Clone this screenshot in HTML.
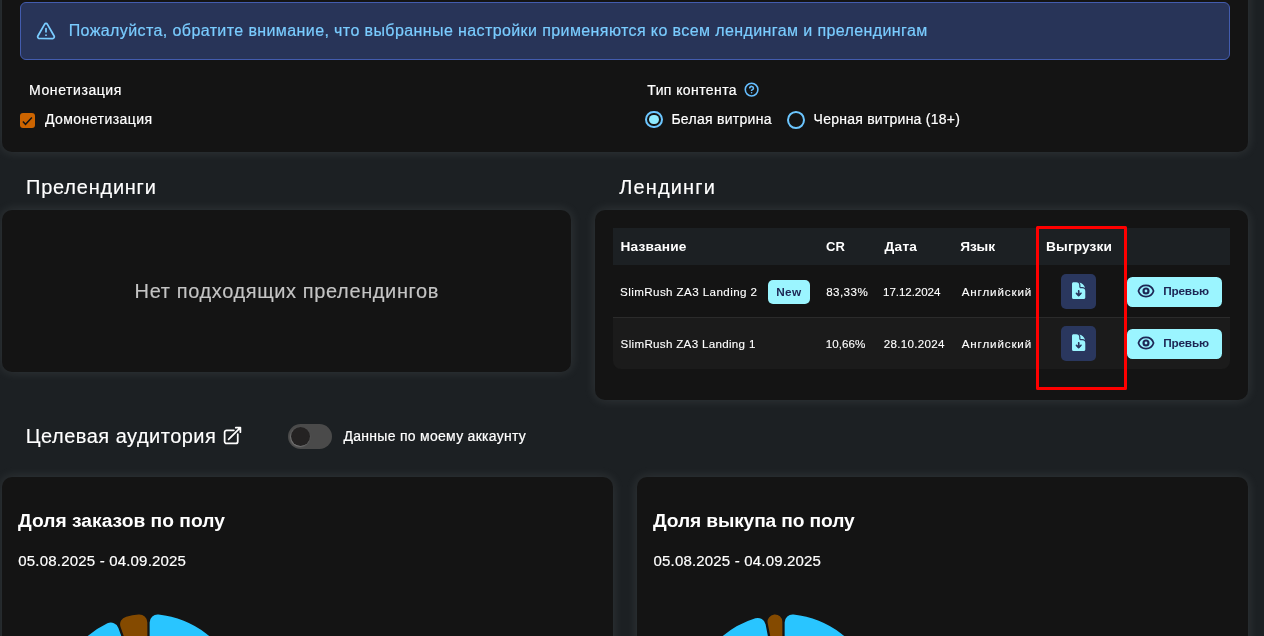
<!DOCTYPE html>
<html lang="ru">
<head>
<meta charset="utf-8">
<title>Offer</title>
<style>
*{box-sizing:border-box;margin:0;padding:0}
html,body{width:1264px;height:636px;overflow:hidden;background:#1c2023}
body{font-family:"Liberation Sans",sans-serif;color:#fff;position:relative}
.card{position:absolute;background:#141414;border-radius:10px;box-shadow:0 0 12px rgba(235,250,250,.115)}
.t{position:absolute;white-space:nowrap;line-height:1;-webkit-text-stroke:.2px}
.t.b{-webkit-text-stroke:0}
.abs{position:absolute}
.b{font-weight:700}
</style>
</head>
<body>
<div id="root" style="position:absolute;left:0;top:0;width:1264px;height:636px;overflow:hidden;will-change:transform">

<!-- top settings card -->
<div class="card" style="left:2px;top:-20px;width:1246px;height:172px"></div>
<div class="abs" style="left:20px;top:2px;width:1210px;height:58px;background:#283458;border:1px solid #435cae;border-radius:6px"></div>
<svg class="abs" style="left:35.5px;top:20.5px" width="20" height="20" viewBox="0 0 24 24" fill="none" stroke="#7accff" stroke-width="2.1" stroke-linecap="round" stroke-linejoin="round"><path d="m21.73 18-8-14a2 2 0 0 0-3.48 0l-8 14A2 2 0 0 0 4 21h16a2 2 0 0 0 1.73-3"/><path d="M12 9v4"/><path d="M12 17h.01"/></svg>
<span class="t" id="banner" style="left:68.7px;top:22.6px;font-size:16px;letter-spacing:0.40px;color:#7accff">Пожалуйста, обратите внимание, что выбранные настройки применяются ко всем лендингам и прелендингам</span>

<span class="t" id="mon" style="left:29.1px;top:83px;font-size:14px;letter-spacing:0.57px">Монетизация</span>
<div class="abs" style="left:20px;top:112.7px;width:15.3px;height:15.4px;background:#cc6400;border-radius:3px"></div>
<svg class="abs" style="left:20px;top:112.7px" width="16" height="16" viewBox="0 0 16 16" fill="none" stroke="#141414" stroke-width="1.5" stroke-linecap="butt" stroke-linejoin="miter"><path d="M2.9 8.6L5.5 11.3L11.9 4.5"/></svg>
<span class="t" id="demon" style="left:45.0px;top:112px;font-size:14px;letter-spacing:0.44px">Домонетизация</span>

<span class="t" id="tip" style="left:647.3px;top:83px;font-size:14px;letter-spacing:0.41px">Тип контента</span>
<svg class="abs" style="left:743.7px;top:82.45px" width="15.2" height="15.2" viewBox="0 0 24 24" fill="none" stroke="#66beff" stroke-width="2.5" stroke-linecap="round" stroke-linejoin="round"><circle cx="12" cy="12" r="10"/><path d="M9.09 9a3 3 0 0 1 5.83 1c0 2-3 3-3 3"/><path d="M12 17h.01"/></svg>

<div class="abs" style="left:644.9px;top:110.8px;width:17.7px;height:17.7px;border:2.2px solid #6cc6ff;border-radius:50%"></div>
<div class="abs" style="left:648.95px;top:114.85px;width:9.6px;height:9.6px;background:#8feaff;border-radius:50%"></div>
<span class="t" id="white" style="left:671.4px;top:112px;font-size:14px;letter-spacing:0.28px">Белая витрина</span>
<div class="abs" style="left:787.1px;top:110.8px;width:17.9px;height:17.9px;border:2.2px solid #6cc6ff;border-radius:50%"></div>
<span class="t" id="black" style="left:813.6px;top:112px;font-size:14px;letter-spacing:0.24px">Черная витрина (18+)</span>

<!-- Prelandings -->
<span class="t" id="pre" style="left:26.1px;top:177px;font-size:20px;-webkit-text-stroke:.15px;letter-spacing:0.76px">Прелендинги</span>
<div class="card" style="left:2px;top:210px;width:569px;height:162px"></div>
<span class="t" id="nopre" style="left:134.6px;top:281px;font-size:20px;-webkit-text-stroke:.15px;letter-spacing:0.62px;color:#c4c4c4">Нет подходящих прелендингов</span>

<!-- Landings -->
<span class="t" id="land" style="left:619.2px;top:177px;font-size:20px;-webkit-text-stroke:.15px;letter-spacing:1.14px">Лендинги</span>
<div class="card" style="left:595px;top:210px;width:653px;height:190px"></div>
<div class="abs" style="left:613px;top:228px;width:617px;height:141px;border-radius:0 0 8px 8px;overflow:hidden">
  <div class="abs" style="left:0;top:0;width:617px;height:37px;background:#1c2023"></div>
  <div class="abs" style="left:0;top:37px;width:617px;height:52px;background:#141414"></div>
  <div class="abs" style="left:0;top:89px;width:617px;height:52px;background:#1b1b1b;border-top:1px solid #2b2b2b"></div>
</div>
<span class="t b" id="h1" style="left:620.4px;top:239.5px;font-size:13.7px;letter-spacing:0.20px">Название</span>
<span class="t b" id="h2" style="left:826.1px;top:239.5px;font-size:13.7px;transform:scaleX(.95);transform-origin:0 0;letter-spacing:0.04px">CR</span>
<span class="t b" id="h3" style="left:884.6px;top:239.5px;font-size:13.7px;letter-spacing:0.22px">Дата</span>
<span class="t b" id="h4" style="left:960.2px;top:239.5px;font-size:13.7px;letter-spacing:-0.13px">Язык</span>
<span class="t b" id="h5" style="left:1046.1px;top:239.5px;font-size:13.7px;letter-spacing:0.11px">Выгрузки</span>

<span class="t" id="r1a" style="left:620.1px;top:285.6px;font-size:11.6px;-webkit-text-stroke:.12px;letter-spacing:0.41px">SlimRush ZA3 Landing 2</span>
<div class="abs" style="left:768px;top:280px;width:42px;height:24px;background:#9bf5ff;border-radius:5px"></div>
<span class="t b" id="new" style="left:776.2px;top:286.5px;font-size:11.8px;letter-spacing:0.35px;color:#1d2654">New</span>
<span class="t" id="r1b" style="left:826.2px;top:285.6px;font-size:11.6px;-webkit-text-stroke:.12px;letter-spacing:0.44px">83,33%</span>
<span class="t" id="r1c" style="left:883.1px;top:285.6px;font-size:11.6px;-webkit-text-stroke:.12px;letter-spacing:-0.08px">17.12.2024</span>
<span class="t" id="r1d" style="left:961.7px;top:285.6px;font-size:11.6px;-webkit-text-stroke:.12px;letter-spacing:0.88px">Английский</span>

<span class="t" id="r2a" style="left:620.6px;top:337.5px;font-size:11.6px;-webkit-text-stroke:.12px;letter-spacing:0.31px">SlimRush ZA3 Landing 1</span>
<span class="t" id="r2b" style="left:825.8px;top:337.5px;font-size:11.6px;-webkit-text-stroke:.12px;letter-spacing:0.03px">10,66%</span>
<span class="t" id="r2c" style="left:883.7px;top:337.5px;font-size:11.6px;-webkit-text-stroke:.12px;letter-spacing:0.31px">28.10.2024</span>
<span class="t" id="r2d" style="left:961.7px;top:337.5px;font-size:11.6px;-webkit-text-stroke:.12px;letter-spacing:0.87px">Английский</span>

<!-- download buttons -->
<div class="abs" style="left:1061px;top:274px;width:35px;height:35px;background:#2a375e;border-radius:5px"></div>
<div class="abs" style="left:1061px;top:326px;width:35px;height:35px;background:#2a375e;border-radius:5px"></div>
<svg class="abs" style="left:1069.4px;top:280.85px" width="19.3" height="19.3" viewBox="0 0 24 24" fill="#9bf5ff"><path fill-rule="evenodd" clip-rule="evenodd" d="M5.625 1.5H9a3.75 3.75 0 0 1 3.75 3.75v1.875c0 1.036.84 1.875 1.875 1.875H16.5a3.75 3.75 0 0 1 3.75 3.75v7.875c0 1.035-.84 1.875-1.875 1.875H5.625a1.875 1.875 0 0 1-1.875-1.875V3.375c0-1.036.84-1.875 1.875-1.875Zm5.845 17.03a.75.75 0 0 0 1.06 0l3-3a.75.75 0 1 0-1.06-1.06l-1.72 1.72V12a.75.75 0 0 0-1.5 0v4.19l-1.72-1.72a.75.75 0 0 0-1.06 1.06l3 3Z"/><path d="M12 12v6M9.4 15.6l2.6 2.6 2.6-2.6" fill="none" stroke="#2a375e" stroke-width="1.9" stroke-linecap="round" stroke-linejoin="round"/><path d="M14.25 5.25a5.23 5.23 0 0 0-1.279-3.434 9.768 9.768 0 0 1 6.963 6.963A5.23 5.23 0 0 0 16.5 7.5h-1.875a.375.375 0 0 1-.375-.375V5.25Z"/></svg>
<svg class="abs" style="left:1069.4px;top:332.85px" width="19.3" height="19.3" viewBox="0 0 24 24" fill="#9bf5ff"><path fill-rule="evenodd" clip-rule="evenodd" d="M5.625 1.5H9a3.75 3.75 0 0 1 3.75 3.75v1.875c0 1.036.84 1.875 1.875 1.875H16.5a3.75 3.75 0 0 1 3.75 3.75v7.875c0 1.035-.84 1.875-1.875 1.875H5.625a1.875 1.875 0 0 1-1.875-1.875V3.375c0-1.036.84-1.875 1.875-1.875Zm5.845 17.03a.75.75 0 0 0 1.06 0l3-3a.75.75 0 1 0-1.06-1.06l-1.72 1.72V12a.75.75 0 0 0-1.5 0v4.19l-1.72-1.72a.75.75 0 0 0-1.06 1.06l3 3Z"/><path d="M12 12v6M9.4 15.6l2.6 2.6 2.6-2.6" fill="none" stroke="#2a375e" stroke-width="1.9" stroke-linecap="round" stroke-linejoin="round"/><path d="M14.25 5.25a5.23 5.23 0 0 0-1.279-3.434 9.768 9.768 0 0 1 6.963 6.963A5.23 5.23 0 0 0 16.5 7.5h-1.875a.375.375 0 0 1-.375-.375V5.25Z"/></svg>

<!-- preview buttons -->
<div class="abs" style="left:1127px;top:277px;width:95px;height:30px;background:#9bf5ff;border-radius:5.5px"></div>
<div class="abs" style="left:1127px;top:329px;width:95px;height:30px;background:#9bf5ff;border-radius:5.5px"></div>
<svg class="abs" style="left:1137.1px;top:281.8px" width="18" height="18" viewBox="0 0 24 24" fill="none" stroke="#1d2654" stroke-width="2.3" stroke-linecap="round" stroke-linejoin="round"><path d="M2.036 12.322a1.012 1.012 0 0 1 0-.639C3.423 7.51 7.36 4.5 12 4.5c4.638 0 8.573 3.007 9.963 7.178.07.207.07.431 0 .639C20.577 16.49 16.64 19.5 12 19.5c-4.638 0-8.573-3.007-9.963-7.178Z"/><circle cx="12" cy="12" r="3.3" stroke-width="2.9"/></svg>
<svg class="abs" style="left:1137.1px;top:333.8px" width="18" height="18" viewBox="0 0 24 24" fill="none" stroke="#1d2654" stroke-width="2.3" stroke-linecap="round" stroke-linejoin="round"><path d="M2.036 12.322a1.012 1.012 0 0 1 0-.639C3.423 7.51 7.36 4.5 12 4.5c4.638 0 8.573 3.007 9.963 7.178.07.207.07.431 0 .639C20.577 16.49 16.64 19.5 12 19.5c-4.638 0-8.573-3.007-9.963-7.178Z"/><circle cx="12" cy="12" r="3.3" stroke-width="2.9"/></svg>
<span class="t b" id="pv1" style="left:1163.2px;top:286.1px;font-size:11.8px;color:#1d2654;letter-spacing:-0.19px">Превью</span>
<span class="t b" id="pv2" style="left:1163.2px;top:338.1px;font-size:11.8px;color:#1d2654;letter-spacing:-0.19px">Превью</span>

<!-- red highlight -->
<div class="abs" style="left:1036px;top:226px;width:91.3px;height:164.2px;border:3.2px solid #fe0000;border-radius:1.5px"></div>

<!-- Audience -->
<span class="t" id="aud" style="left:25.8px;top:426px;font-size:20px;-webkit-text-stroke:.15px;letter-spacing:0.49px">Целевая аудитория</span>
<svg class="abs" style="left:221.5px;top:424.85px" width="21" height="21" viewBox="0 0 24 24" fill="none" stroke="#fff" stroke-width="2" stroke-linecap="round" stroke-linejoin="round"><path d="M13.5 6H5.25A2.25 2.25 0 0 0 3 8.25v10.5A2.25 2.25 0 0 0 5.25 21h10.5A2.25 2.25 0 0 0 18 18.75V10.5m-10.5 6L21 3m0 0h-5.25M21 3v5.25"/></svg>
<div class="abs" style="left:287.9px;top:423.8px;width:44.2px;height:25px;background:#4a4a4a;border-radius:12.5px"></div>
<div class="abs" style="left:290.7px;top:426.5px;width:19.6px;height:19.6px;background:#242222;border-radius:50%;box-shadow:-0.6px 0.8px 1.5px rgba(200,200,200,.45)"></div>
<span class="t" id="acc" style="left:343.5px;top:429px;font-size:14px;letter-spacing:0.28px">Данные по моему аккаунту</span>

<!-- chart cards -->
<div class="card" style="left:2px;top:477px;width:611px;height:200px"></div>
<div class="card" style="left:637px;top:477px;width:611px;height:200px"></div>
<span class="t b" id="c1" style="left:18.0px;top:510.9px;font-size:19.2px;letter-spacing:0.03px">Доля заказов по полу</span>
<span class="t b" id="c2" style="left:653.0px;top:510.9px;font-size:19.2px;letter-spacing:-0.13px">Доля выкупа по полу</span>
<span class="t" id="d1" style="left:18.3px;top:553px;font-size:15px;letter-spacing:0.19px">05.08.2025 - 04.09.2025</span>
<span class="t" id="d2" style="left:653.5px;top:553px;font-size:15px;letter-spacing:0.18px">05.08.2025 - 04.09.2025</span>

<!-- pies -->
<svg class="abs" style="left:0;top:590px" width="1264" height="46" viewBox="0 590 1264 46">
  <g id="pies">
  <path d="M105.33 696.24L65.23 685.50A8.00 8.00 0 0 1 59.83 674.90A95 95 0 0 1 107.40 623.35A8.00 8.00 0 0 1 118.39 627.88L132.32 666.99Z" fill="#29c5ff"/>
  <path d="M134.49 666.22L120.56 627.11A8.00 8.00 0 0 1 126.22 616.65A95 95 0 0 1 138.51 614.53A8.00 8.00 0 0 1 147.35 622.48L147.35 664.00Z" fill="#844a00"/>
  <path d="M149.65 664.00L149.65 622.48A8.00 8.00 0 0 1 158.49 614.53A95 95 0 0 1 237.17 674.90A8.00 8.00 0 0 1 231.77 685.50L191.67 696.24Z" fill="#29c5ff"/>
  <path d="M740.33 696.24L700.23 685.50A8.00 8.00 0 0 1 694.83 674.90A95 95 0 0 1 755.35 618.27A8.00 8.00 0 0 1 765.57 624.35L773.63 665.08Z" fill="#29c5ff"/>
  <path d="M775.89 664.63L767.69 623.23A7.38 7.38 0 0 1 774.21 614.46A95 95 0 0 1 774.25 614.45A7.38 7.38 0 0 1 782.35 621.80L782.35 664.00Z" fill="#844a00"/>
  <path d="M784.65 664.00L784.65 622.48A8.00 8.00 0 0 1 793.49 614.53A95 95 0 0 1 872.17 674.90A8.00 8.00 0 0 1 866.77 685.50L826.67 696.24Z" fill="#29c5ff"/>
  </g>
</svg>

</div>
</body>
</html>
